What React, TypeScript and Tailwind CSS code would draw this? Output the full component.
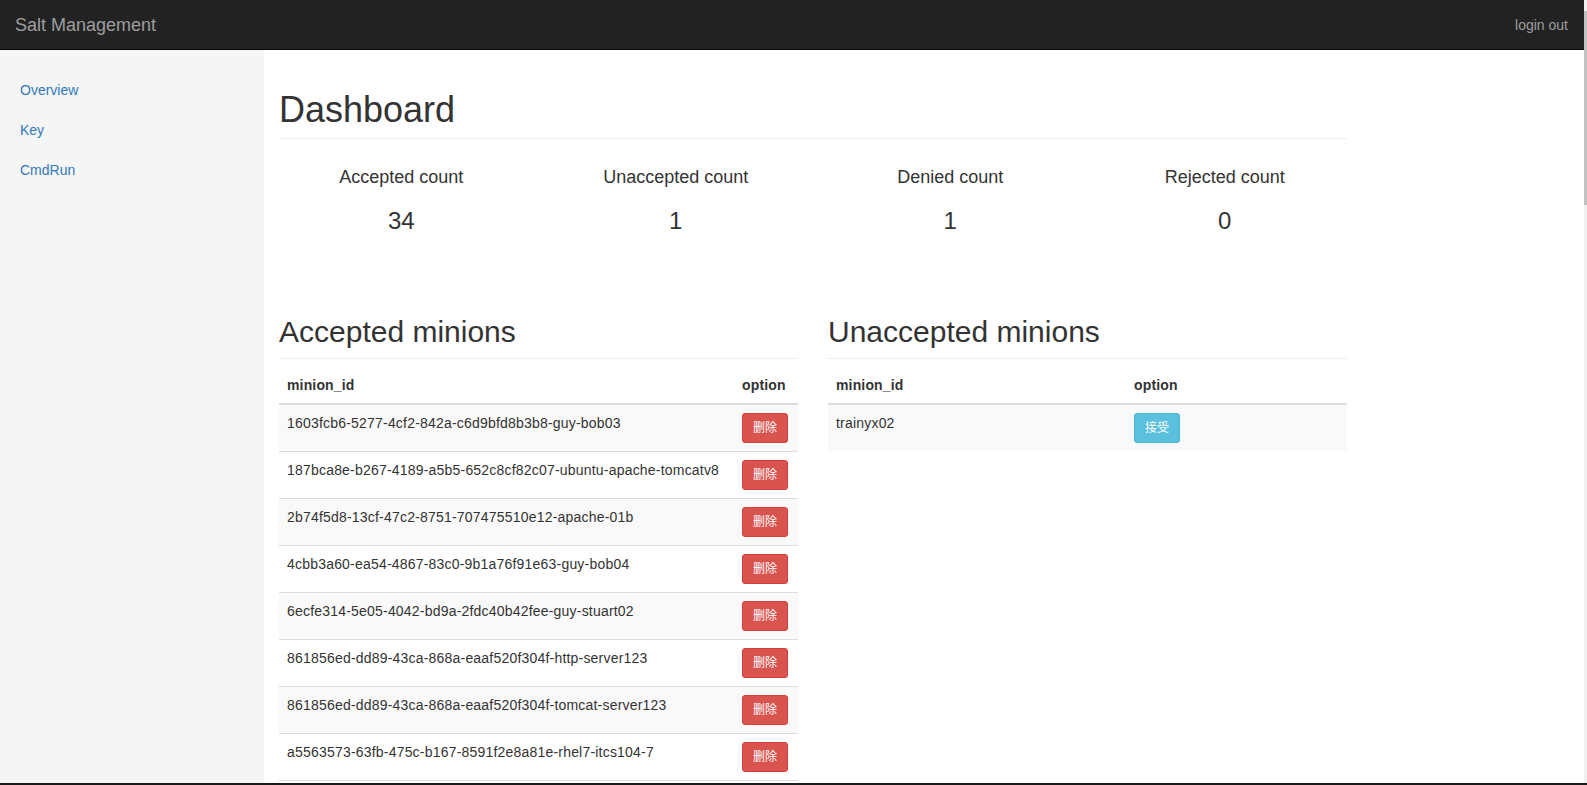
import React from "react";

const accepted = [
  "1603fcb6-5277-4cf2-842a-c6d9bfd8b3b8-guy-bob03",
  "187bca8e-b267-4189-a5b5-652c8cf82c07-ubuntu-apache-tomcatv8",
  "2b74f5d8-13cf-47c2-8751-707475510e12-apache-01b",
  "4cbb3a60-ea54-4867-83c0-9b1a76f91e63-guy-bob04",
  "6ecfe314-5e05-4042-bd9a-2fdc40b42fee-guy-stuart02",
  "861856ed-dd89-43ca-868a-eaaf520f304f-http-server123",
  "861856ed-dd89-43ca-868a-eaaf520f304f-tomcat-server123",
  "a5563573-63fb-475c-b167-8591f2e8a81e-rhel7-itcs104-7",
];

const stats = [
  { label: "Accepted count", value: "34" },
  { label: "Unaccepted count", value: "1" },
  { label: "Denied count", value: "1" },
  { label: "Rejected count", value: "0" },
];

const font = {
  fontFamily: '"Liberation Sans", Arial, "Noto Sans CJK SC", sans-serif',
};

export default function App() {
  return (
    <div
      className="flex h-[785px] w-full flex-col overflow-hidden bg-white text-[14px] text-[#333]"
      style={font}
    >
      <div className="flex min-h-0 flex-1">
        <div className="flex min-w-0 flex-1 flex-col">
          {/* Navbar */}
          <div className="flex h-[50px] shrink-0 items-center justify-between border-b border-[#080808] bg-[#222] pl-[15px] pr-[16px]">
            <span className="text-[18px] leading-[20px] text-[#9d9d9d]">Salt Management</span>
            <span className="text-[14px] leading-[20px] text-[#9d9d9d]">login out</span>
          </div>
          <div className="flex min-h-0 flex-1">
            {/* Sidebar */}
            <div className="w-[264px] shrink-0 bg-[#f5f5f5] pt-[20px]">
              {["Overview", "Key", "CmdRun"].map((l) => (
                <div key={l} className="px-[20px] py-[10px] leading-[20px] text-[#337ab7]">
                  {l}
                </div>
              ))}
            </div>
            {/* Main */}
            <div className="min-w-0 flex-1 pl-[15px]">
              <div className="w-[1068px]">
                <h1 className="mt-[40px] border-b border-[#eee] pb-[8px] text-[36px] leading-[1.1] font-normal">
                  Dashboard
                </h1>
                <div className="mt-[20px] -mx-[15px] grid w-[1098px] grid-cols-4">
                  {stats.map((s) => (
                    <div key={s.label} className="flex flex-col items-center px-[15px] pt-[8px]">
                      <div className="text-[18px] leading-[20px]">{s.label}</div>
                      <div className="mt-[21px] text-[24px] leading-[26px]">{s.value}</div>
                    </div>
                  ))}
                </div>
                <div className="mt-[81px] -mx-[15px] grid w-[1098px] grid-cols-2">
                  <div className="px-[15px]">
                    <h2 className="border-b border-[#eee] pb-[10px] text-[30px] leading-[33px] font-normal">
                      Accepted minions
                    </h2>
                    <table className="mt-[8px] w-full border-collapse">
                      <thead>
                        <tr>
                          <th className="border-b-2 border-[#ddd] p-[8px] text-left align-bottom leading-[20px] font-bold tracking-[0.15px]">
                            minion_id
                          </th>
                          <th className="w-[64px] border-b-2 border-[#ddd] p-[8px] text-left align-bottom leading-[20px] font-bold whitespace-nowrap tracking-[0.15px]">
                            option
                          </th>
                        </tr>
                      </thead>
                      <tbody>
                        {accepted.map((id, i) => (
                          <tr key={id} className={(i % 2 === 0 ? "bg-[#f9f9f9]" : "bg-white") + " border-b border-[#ddd]"}>
                            <td className="p-[8px] align-top leading-[20px] whitespace-nowrap tracking-[0.2px]">
                              {id}
                            </td>
                            <td className="p-[8px] align-top">
                              <button className="whitespace-nowrap rounded-[3px] border border-[#d43f3a] bg-[#d9534f] px-[10px] py-[5px] text-[12px] leading-[18px] text-white">
                                删除
                              </button>
                            </td>
                          </tr>
                        ))}
                      </tbody>
                    </table>
                  </div>
                  <div className="px-[15px]">
                    <h2 className="border-b border-[#eee] pb-[10px] text-[30px] leading-[33px] font-normal">
                      Unaccepted minions
                    </h2>
                    <table className="mt-[8px] w-full border-collapse">
                      <thead>
                        <tr>
                          <th className="w-[298px] border-b-2 border-[#ddd] p-[8px] text-left align-bottom leading-[20px] font-bold tracking-[0.15px]">
                            minion_id
                          </th>
                          <th className="border-b-2 border-[#ddd] p-[8px] text-left align-bottom leading-[20px] font-bold tracking-[0.15px]">
                            option
                          </th>
                        </tr>
                      </thead>
                      <tbody>
                        <tr className="bg-[#f9f9f9]">
                          <td className="p-[8px] align-top leading-[20px] tracking-[0.2px]">trainyx02</td>
                          <td className="p-[8px] align-top">
                            <button className="whitespace-nowrap rounded-[3px] border border-[#46b8da] bg-[#5bc0de] px-[10px] py-[5px] text-[12px] leading-[18px] text-white">
                              接受
                            </button>
                          </td>
                        </tr>
                      </tbody>
                    </table>
                  </div>
                </div>
              </div>
            </div>
          </div>
        </div>
        {/* scrollbar */}
        <div className="flex w-[3px] shrink-0 flex-col bg-[#f0f0f0]">
          <div className="mt-[11px] h-[194px] bg-[#c1c1c1]" />
        </div>
      </div>
      <div className="h-[2px] shrink-0 bg-[#1a1a1a]" />
    </div>
  );
}
